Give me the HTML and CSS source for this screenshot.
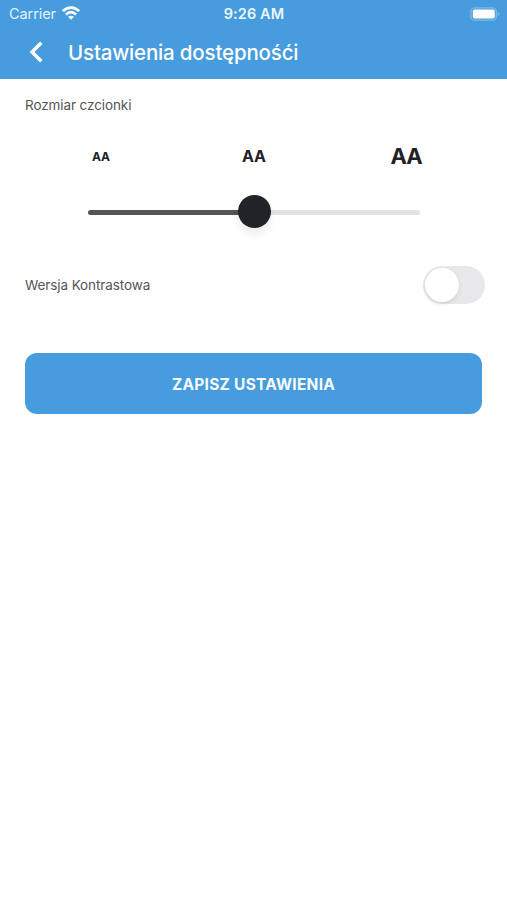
FILE: index.html
```html
<!DOCTYPE html>
<html lang="pl">
<head>
<meta charset="utf-8">
<title>Ustawienia</title>
<link rel="stylesheet" href="styles.css">
</head>
<body>
<header class="header">
  <div class="status">
    <div class="carrier"><span>Carrier</span>
      <svg class="wifi" width="18" height="14" viewBox="0 0 18 14" fill="none" stroke="#fff" stroke-width="2.7"><path d="M.9 5.1Q4.500 1.600 9 1.600T17.100 5.100M4 8.600Q6.200 6.200 9 6.200T14 8.600"/><path d="M6 10.700Q9 8.600 12 10.700L9 13.700Z" fill="#fff" stroke="none"/></svg>
    </div>
    <time class="clock">9:26 AM</time>
    <svg class="battery" width="30" height="14" viewBox="0 0 30 14"><rect x=".9" y=".8" width="25.400" height="12.400" rx="3.800" fill="none" stroke="#80bbea" stroke-width="1.300"/><rect x="2.800" y="2.500" width="22" height="9" rx="2" fill="#fff"/><path d="M27.600 4.800Q29.400 5.600 29.400 7T27.600 9.200Z" fill="#80bbea"/></svg>
  </div>
  <div class="nav">
    <svg class="back" width="14" height="22" viewBox="0 0 14 22" fill="none" stroke="#fff" stroke-width="3.400"><path d="M12.300 1.700L3 11L12.300 20.300"/></svg>
    <h1 class="title">Ustawienia dostępnośći</h1>
  </div>
</header>
<main class="content">
  <h2 class="label">Rozmiar czcionki</h2>
  <div class="sizes"><span class="small">AA</span><span class="medium">AA</span><span class="large">AA</span></div>
  <div class="slider"><div class="filled"></div><div class="rest"></div><div class="knob"></div></div>
  <div class="contrast"><span class="label contrast-label">Wersja Kontrastowa</span><div class="switch"><div class="thumb"></div></div></div>
  <button class="save"><span>ZAPISZ USTAWIENIA</span></button>
</main>
</body>
</html>
```
FILE: styles.css
```css
* { box-sizing: border-box; }
body { margin: 0; height: 900px; background: #fff; font-family: Inter, "Liberation Sans", sans-serif; }
.header { height: 79px; background: #479cdd; color: #fff; }
.status { height: 27px; padding: 0 7px 0 9px; display: grid; grid-template-columns: 1fr auto 1fr; align-items: center; }
.carrier { display: flex; align-items: center; gap: 6px; font-size: 14.5px; letter-spacing: -.08px; color: #e2f3ff; }
.wifi { margin-top: -1px; }
.clock { margin-left: -1px; font-size: 14.5px; font-weight: 600; color: #eaf7ff; letter-spacing: .1px; }
.battery { justify-self: end; }
.nav { height: 50px; padding-left: 29px; display: flex; align-items: center; gap: 25px; }
.title { margin: 1px 0 0; font-size: 20.5px; font-weight: 500; white-space: nowrap; line-height: 28px; letter-spacing: -.17px; }
.content { padding: 16px 25px 0; }
.label { margin: 0; font-size: 13.5px; line-height: 20px; font-weight: 400; color: #555; letter-spacing: -.1px; }
.sizes { margin: 26px 43px 0; height: 30px; padding: 0 0 0 1px; display: grid; grid-template-columns: 64px 1fr 64px; align-items: center; text-align: center; color: #202225; font-weight: 700; }
.small { font-size: 12px; }
.medium { font-size: 16px; }
.large { font-size: 22px; letter-spacing: -1px; padding-right: 2px; }
.slider { position: relative; width: 332px; height: 34px; margin: 23px 0 0 63px; display: flex; align-items: center; padding-top: 2px; }
.filled { width: 50%; height: 5px; border-radius: 3px; background: #555354; }
.rest { width: 50%; height: 5px; border-radius: 3px; background: #e2e2e3; }
.knob { position: absolute; left: 150px; top: .5px; width: 33px; height: 33px; border-radius: 50%; background: #202327; box-shadow: 0 6px 10px rgba(0,0,0,.08); }
.contrast { margin: 37.5px -3px 0 0; height: 38px; display: flex; justify-content: space-between; align-items: center; }
.switch { width: 62px; height: 38px; padding: 2px; border-radius: 19px; background: #e8e8ea; }
.thumb { width: 34px; height: 34px; border-radius: 50%; background: #fff; box-shadow: 0 2px 4px rgba(0,0,0,.1); }
.save { display: block; width: 457px; height: 61px; margin-top: 49.5px; padding: 2px 0 0; border: 0; border-radius: 12px; background: #479cdd; color: #f5fbff; font: 700 15.5px/20px Inter, "Liberation Sans", sans-serif; letter-spacing: .25px; }
```
